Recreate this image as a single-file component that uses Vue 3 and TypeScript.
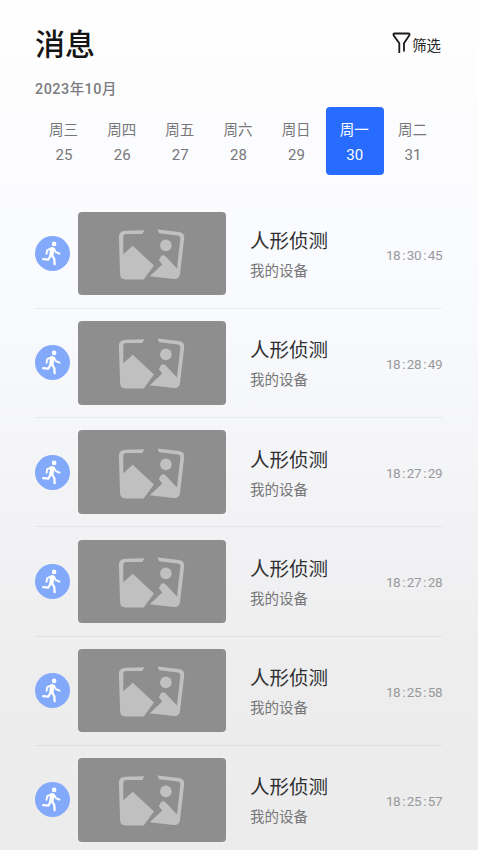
<script setup lang="ts">
interface Day {
  week: string
  date: number
  active?: boolean
}

const days: Day[] = [
  { week: '周三', date: 25 },
  { week: '周四', date: 26 },
  { week: '周五', date: 27 },
  { week: '周六', date: 28 },
  { week: '周日', date: 29 },
  { week: '周一', date: 30, active: true },
  { week: '周二', date: 31 },
]

const times: string[] = ['18:30:45', '18:28:49', '18:27:29', '18:27:28', '18:25:58', '18:25:57']
</script>

<template>
  <main class="page">
    <header class="header">
      <h1 class="title">消息</h1>
      <button class="filter" type="button">
        <svg class="funnel" width="20" height="22" viewBox="0 0 20 22" fill="none">
          <path d="M7.3 20.9V11.2L1.8 3.6Q.6 1.5 2.8 1.5H16.2Q18.4 1.5 17.2 3.6L12 11.2V19.4" stroke="currentColor" stroke-width="1.8" stroke-linejoin="round" />
        </svg>
        <span>筛选</span>
      </button>
    </header>
    <div class="month">2023年10月</div>
    <nav class="days">
      <div v-for="d in days" :key="d.date" class="day" :class="{ active: d.active }">
        <span class="week">{{ d.week }}</span>
        <span class="date">{{ d.date }}</span>
      </div>
    </nav>
    <ul class="list">
      <li v-for="t in times" :key="t" class="row">
        <span class="badge">
          <svg width="35" height="35" viewBox="0 0 35 35" fill="none" stroke="#fff" stroke-linecap="round" stroke-linejoin="round">
            <circle cx="19.1" cy="7.9" r="2.3" fill="#fff" stroke="none" />
            <path d="M17.2 13.1 16.4 18.8" stroke-width="4.4" />
            <path d="M16.4 12.3 12.2 14.2 11.5 17.8M19 12.8 20.8 16.1 24.5 17.7" stroke-width="1.9" />
            <path d="M15.4 20 13.3 23.6 8.2 23.2M17.3 19.8 19.3 23 19.6 28.2" stroke-width="2.3" />
          </svg>
        </span>
        <span class="thumb">
          <svg class="picture" width="67" height="52" viewBox="0 0 67 52" fill="#c0c0c1">
            <path d="M26.4 1.2 24.2 5H8.6Q5.3 5 5.3 8.2V25.3L14.7 16.7 36 36.5 25.7 50.4H7.7Q2.5 50.4 2.1 45.2L.9 8.3Q.8 2 7.2 1.7Z" />
            <path fill-rule="evenodd" d="M39.6.5 61 2.9Q66.8 3.8 66.2 9.2L62 45Q61.3 50.5 55.7 50L31.7 47.3 44.3 35.5 40.8 31.2 42.8 27.4Q45.2 25.2 47.7 27.4L59 39.4 62.3 10.1Q62.8 6.8 59.8 6.4L41 4.3Z" />
            <circle cx="47.9" cy="16.4" r="5.8" />
          </svg>
        </span>
        <div class="info">
          <div class="event">人形侦测</div>
          <div class="device">我的设备</div>
        </div>
        <time class="time"><template v-for="(part, i) in t.split(':')" :key="i"><span v-if="i > 0" class="colon">:</span>{{ part }}</template></time>
      </li>
    </ul>
  </main>
</template>

<style>
body {
  overflow: hidden;
}
</style>

<style scoped>
.page {
  box-sizing: border-box;
  height: 850px;
  overflow: hidden;
  padding: 21px 36px 0 35px;
  background: linear-gradient(180deg, #fefefe 0%, #fafbfe 30%, #f8f9fc 40%, #ededee 80%, #ececec 100%);
  font-family: 'Noto Sans CJK SC', sans-serif;
  color: #777779;
}
.header {
  display: flex;
  justify-content: space-between;
  align-items: flex-start;
  height: 44px;
}
.title {
  margin: 0;
  font-size: 30px;
  line-height: 42px;
  font-weight: 500;
  color: #151515;
}
.filter {
  display: flex;
  align-items: center;
  padding: 13px 1px 0 0;
  border: 0;
  background: none;
  font: 400 14.4px/22px 'Noto Sans CJK SC', sans-serif;
  color: #252525;
}
.funnel {
  margin: -4px 0 0;
  color: #1a1a1a;
}
.month {
  margin-top: 15px;
  font: 500 14.4px/20px Roboto, 'Noto Sans CJK SC', sans-serif;
  letter-spacing: 0.5px;
  color: #7c7c7e;
}
.days {
  display: flex;
  margin-top: 7px;
}
.day {
  box-sizing: border-box;
  display: flex;
  flex-direction: column;
  align-items: center;
  width: 58.2px;
  height: 68px;
  padding-top: 10px;
  border-radius: 4px;
}
.week {
  font-size: 14.5px;
  line-height: 23px;
  margin-right: 1px;
}
.date {
  margin-top: 2px;
  font: 400 15px/27px Roboto, sans-serif;
  letter-spacing: 0.1px;
}
.active {
  background: #286cff;
  color: #fff;
}
.list {
  margin: 24.5px 0 0;
  padding: 0;
  list-style: none;
}
.row {
  box-sizing: border-box;
  display: flex;
  align-items: center;
  height: 109.25px;
  border-bottom: 1px solid rgba(70, 80, 110, 0.08);
}
.badge {
  width: 35px;
  height: 35px;
  border-radius: 50%;
  background: #83a9fa;
}
.badge svg {
  display: block;
}
.thumb {
  display: flex;
  align-items: center;
  justify-content: center;
  width: 148px;
  height: 83.5px;
  margin-left: 8px;
  border-radius: 4px;
  background: #8e8e8f;
}
.picture {
  margin: 3px 1px 0 0;
}
.info {
  margin-left: 24px;
}
.event {
  font-size: 19.5px;
  line-height: 30px;
  color: #303032;
}
.device {
  font-size: 14.5px;
  line-height: 24px;
  margin-top: 3px;
}
.time {
  margin-left: auto;
  padding-top: 2px;
  font: 400 13.5px/20px Roboto, sans-serif;
  letter-spacing: -0.5px;
  color: #999a9c;
}
.colon {
  margin: 0 1.8px 0 2.2px;
}
</style>
